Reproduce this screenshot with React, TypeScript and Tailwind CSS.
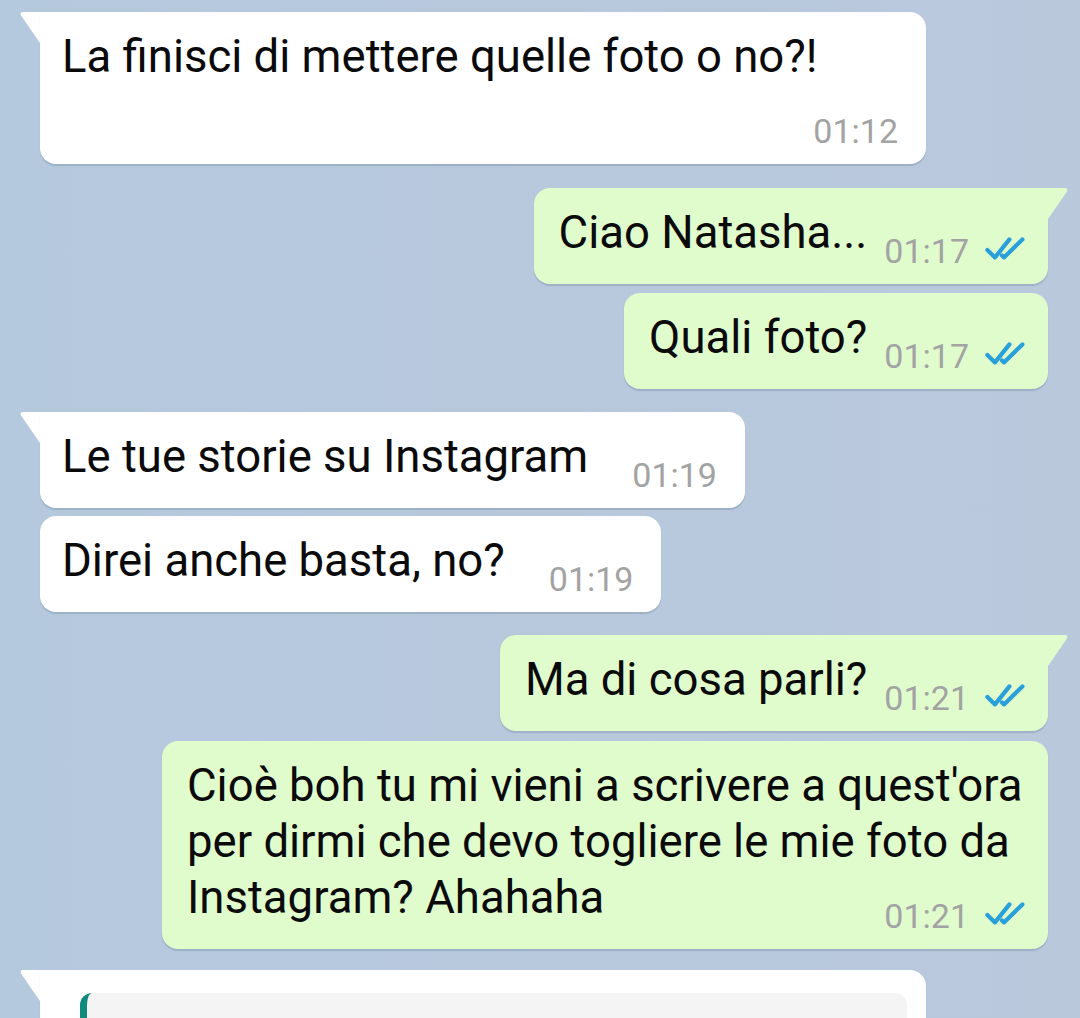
type Msg = {
  side: "in" | "out";
  text?: string;
  time?: string;
  tail?: boolean;
  gap: string;
  quote?: boolean;
};

const messages: Msg[] = [
  { side: "in", text: "La finisci di mettere quelle foto o no?!", time: "01:12", tail: true, gap: "mt-0" },
  { side: "out", text: "Ciao Natasha...", time: "01:17", tail: true, gap: "mt-[24px]" },
  { side: "out", text: "Quali foto?", time: "01:17", gap: "mt-[9px]" },
  { side: "in", text: "Le tue storie su Instagram", time: "01:19", tail: true, gap: "mt-[23px]" },
  { side: "in", text: "Direi anche basta, no?", time: "01:19", gap: "mt-[8px]" },
  { side: "out", text: "Ma di cosa parli?", time: "01:21", tail: true, gap: "mt-[23px]" },
  {
    side: "out",
    text: "Cioè boh tu mi vieni a scrivere a quest'ora per dirmi che devo togliere le mie foto da Instagram? Ahahaha",
    time: "01:21",
    gap: "mt-[10px]",
  },
  { side: "in", tail: true, quote: true, gap: "mt-[21px]" },
];

function Ticks() {
  return (
    <svg width="40" height="23" viewBox="0 0 40 23" className="mb-[8px]" fill="none">
      <path d="M2.4 13 L10 20.4 L24.4 2.4" stroke="#29a0da" strokeWidth="4.2" strokeLinecap="round" strokeLinejoin="round" />
      <path d="M17 18.4 L19 20.4 L37.4 2.4" stroke="#29a0da" strokeWidth="4.2" strokeLinecap="round" strokeLinejoin="round" />
    </svg>
  );
}

function Tail({ side }: { side: "in" | "out" }) {
  if (side === "in") {
    return (
      <svg width="20" height="31" viewBox="0 0 20 31" className="shrink-0">
        <path d="M2.5 0 H20 V31 L1 3.6 Q-0.2 0 2.5 0 Z" fill="#ffffff" />
      </svg>
    );
  }
  return (
    <svg width="20" height="31" viewBox="0 0 20 31" className="shrink-0">
      <path d="M17.5 0 H0 V31 L19 3.6 Q20.2 0 17.5 0 Z" fill="#e0fccd" />
    </svg>
  );
}

function Bubble({ m }: { m: Msg }) {
  const out = m.side === "out";
  const shape = m.tail
    ? out
      ? "rounded-[16px] rounded-tr-none"
      : "rounded-[16px] rounded-tl-none"
    : "rounded-[16px]";

  let body;
  if (m.quote) {
    body = (
      <div className={`w-[886px] bg-white pt-[23px] pl-[40px] pr-[19px] pb-[20px] shadow-[0_1.5px_1px_rgba(40,70,100,0.18)] ${shape}`}>
        <div className="h-[90px] rounded-[12px] border-l-[7px] border-[#0f8a7d] bg-[#f4f4f4]" />
      </div>
    );
  } else {
    body = (
      <div
        className={`max-w-[886px] pt-[17px] pb-[16px] shadow-[0_1.5px_1px_rgba(40,70,100,0.18)] ${shape} ${
          out ? "bg-[#e0fccd] pl-[25px] pr-[23px]" : "bg-white pl-[22px] pr-[28px]"
        }`}
      >
        <p className="flow-root text-[45.5px] leading-[56px] text-[#0a0a0a]">
          {m.text}
          <span className={`float-right mt-[29px] flex items-end gap-[16px] ${out ? "ml-[17px]" : "ml-[44px]"}`}>
            <span className="text-[34px] leading-none text-[#a3a3a3]">{m.time}</span>
            {out && <Ticks />}
          </span>
        </p>
      </div>
    );
  }

  const spacer = <div className="w-[20px] shrink-0" />;
  const edge = m.tail ? <Tail side={m.side} /> : spacer;

  return (
    <div className={`flex items-start ${out ? "justify-end" : "justify-start"} ${m.gap}`}>
      {!out && edge}
      {body}
      {out && edge}
    </div>
  );
}

export default function App() {
  return (
    <div
      className="w-[1080px] h-[1018px] overflow-hidden bg-gradient-to-r from-[#b5c9de] to-[#bac8dc] pt-[12px] pl-[20px] pr-[12px] flex flex-col"
      style={{ fontFamily: "Roboto, 'Noto Sans', sans-serif" }}
    >
      {messages.map((m, i) => (
        <Bubble key={i} m={m} />
      ))}
    </div>
  );
}
